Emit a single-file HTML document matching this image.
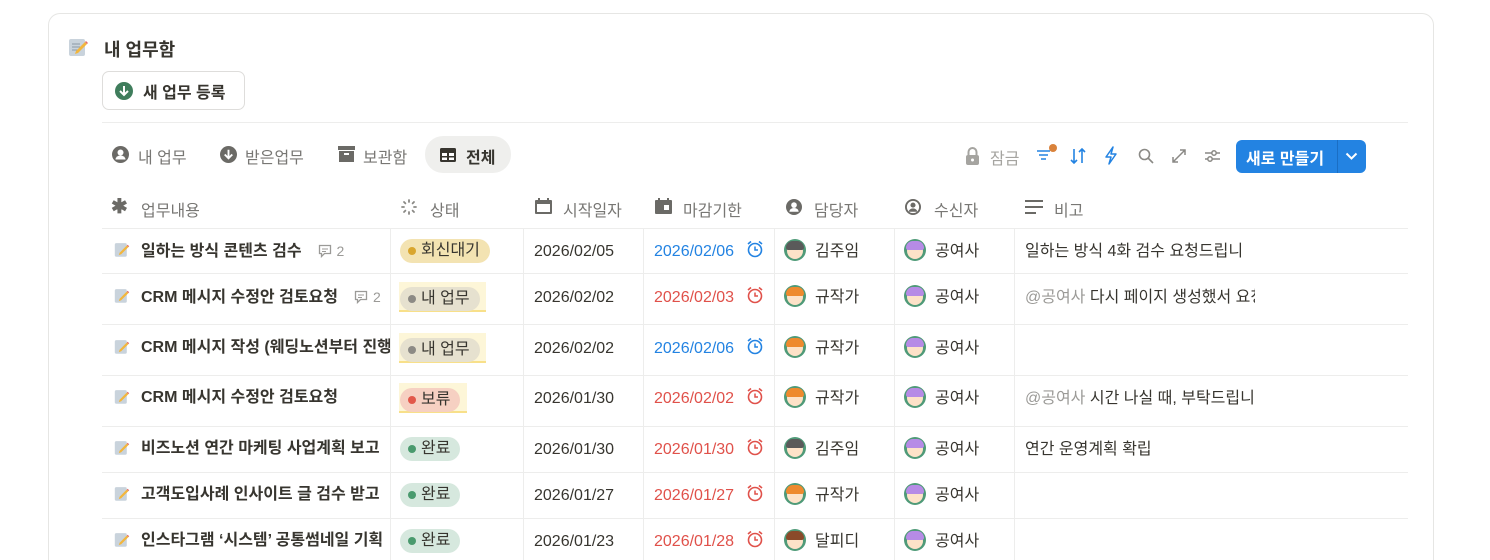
<!DOCTYPE html>
<html><head><meta charset="utf-8"><style>
*{box-sizing:border-box;margin:0;padding:0}
html,body{width:1490px;height:560px;overflow:hidden}
body{background:#fff;font-family:"Liberation Sans","Noto Sans CJK KR",sans-serif;color:#37352f;position:relative;font-size:16px}
.a{position:absolute;white-space:nowrap}
.card{position:absolute;left:48px;top:13px;width:1386px;height:547px;border:1px solid #e6e6e4;border-bottom:none;border-radius:12px 12px 0 0}
.hl{position:absolute;height:1px;background:#ededec;left:102px;width:1306px}
.vl{position:absolute;width:1px;background:#ededec}
.hdr{color:#787774;font-size:16px}
.rt{line-height:20px}
.tag{position:absolute;height:24px;border-radius:12px;padding:0 10px 0 8px;font-size:16px;line-height:24px;display:flex;align-items:center;gap:5px}
.dot{width:8px;height:8px;border-radius:50%}
.av{position:absolute;width:22px;height:22px;border-radius:50%;background:#4f9a78;overflow:hidden}
.av i{position:absolute;left:3px;top:4px;width:16px;height:16px;border-radius:50%;background:#fde2c8}
.av b{position:absolute;left:2px;top:2px;width:18px;height:9px;border-radius:9px 9px 3px 3px}
</style></head><body>
<div class="card"></div>
<svg class="a" style="left:68px;top:37px" width="20" height="20" viewBox="0 0 20 20"><rect x="1" y="2" width="16" height="17" rx="2" fill="#c9d3dc"/><path d="M4 7h8M4 10h8M4 13h6" stroke="#8a98a6" stroke-width="1"/><path d="M8 14l9-9 2 2-9 9-3 1z" fill="#f2b63d"/><path d="M17 5l2 2 1-1-2-2z" fill="#e46a6a"/></svg>
<div class="a" style="left:104px;top:36px;font-size:18px;font-weight:bold;color:#37352f">내 업무함</div>
<div class="a" style="left:102px;top:71px;width:143px;height:39px;border:1px solid #dedddb;border-radius:7px"></div>
<svg class="a" style="left:115px;top:82px" width="18" height="18" viewBox="0 0 18 18"><circle cx="9" cy="9" r="9" fill="#3f7d5c"/><path d="M9 4v9M5 9l4 4 4-4" stroke="#fff" stroke-width="2" fill="none"/></svg>
<div class="a" style="left:143px;top:79px;font-size:16px;font-weight:bold">새 업무 등록</div>
<div class="hl" style="top:122px"></div>
<svg class="a" style="left:112px;top:146px" width="17" height="17" viewBox="0 0 17 17"><circle cx="8.5" cy="8.5" r="8.5" fill="#6b6a66"/><circle cx="8.5" cy="6.5" r="3" fill="#fff"/><path d="M3.5 13.5a5 4 0 0 1 10 0" fill="#fff"/></svg>
<div class="a" style="left:138px;top:144px;color:#787774">내 업무</div>
<svg class="a" style="left:220px;top:146px" width="17" height="17" viewBox="0 0 18 18"><circle cx="9" cy="9" r="9" fill="#6b6a66"/><path d="M9 4v9M5 9l4 4 4-4" stroke="#fff" stroke-width="2" fill="none"/></svg>
<div class="a" style="left:245px;top:144px;color:#787774">받은업무</div>
<svg class="a" style="left:338px;top:146px" width="17" height="16" viewBox="0 0 17 16"><rect x="0" y="0" width="17" height="4" fill="#6b6a66"/><rect x="1" y="5" width="15" height="11" fill="#6b6a66"/><rect x="6" y="7" width="5" height="2" fill="#fff"/></svg>
<div class="a" style="left:363px;top:144px;color:#787774">보관함</div>
<div class="a" style="left:425px;top:136px;width:86px;height:37px;border-radius:18px;background:#efefed"></div>
<svg class="a" style="left:440px;top:148px" width="16" height="14" viewBox="0 0 16 14"><rect width="16" height="14" rx="1.5" fill="#37352f"/><path d="M2 5h5v3H2zM9 5h5v3H9zM2 9.5h5V12H2zM9 9.5h5V12H9z" fill="#fff"/></svg>
<div class="a" style="left:466px;top:144px;font-weight:bold">전체</div>
<svg class="a" style="left:965px;top:147px" width="15" height="18" viewBox="0 0 15 18"><path d="M3.5 8V5a4 4 0 0 1 8 0v3" stroke="#a5a4a0" stroke-width="2" fill="none"/><rect x="1" y="8" width="13" height="10" rx="2" fill="#a5a4a0"/><circle cx="7.5" cy="13" r="1.5" fill="#fff"/></svg>
<div class="a" style="left:990px;top:145px;color:#a5a4a0">잠금</div>
<svg class="a" style="left:1035px;top:143px" width="24" height="20" viewBox="0 0 24 20"><path d="M2 8h13M4 12h9M6 16h5" stroke="#2383e2" stroke-width="1.6"/><circle cx="18" cy="5" r="4" fill="#d9823b"/></svg>
<svg class="a" style="left:1069px;top:147px" width="18" height="18" viewBox="0 0 18 18"><path d="M5 2v14M2 13l3 3 3-3M13 16V2M10 5l3-3 3 3" stroke="#2383e2" stroke-width="1.6" fill="none"/></svg>
<svg class="a" style="left:1104px;top:146px" width="14" height="19" viewBox="0 0 14 19"><path d="M9 1L2 11h5l-2 7 7-10H7z" stroke="#2383e2" stroke-width="1.5" fill="none" stroke-linejoin="round"/></svg>
<svg class="a" style="left:1138px;top:148px" width="16" height="16" viewBox="0 0 16 16"><circle cx="6.5" cy="6.5" r="5" stroke="#8a8985" stroke-width="1.6" fill="none"/><path d="M10 10l5 5" stroke="#8a8985" stroke-width="1.6"/></svg>
<svg class="a" style="left:1171px;top:148px" width="16" height="16" viewBox="0 0 16 16"><path d="M2 14L14 2M9 2h5v5M2 9v5h5" stroke="#8a8985" stroke-width="1.5" fill="none"/></svg>
<svg class="a" style="left:1204px;top:149px" width="17" height="14" viewBox="0 0 17 14"><path d="M1 4h15M1 10h15" stroke="#8a8985" stroke-width="1.5"/><circle cx="10" cy="4" r="2.2" fill="#fff" stroke="#8a8985" stroke-width="1.5"/><circle cx="6" cy="10" r="2.2" fill="#fff" stroke="#8a8985" stroke-width="1.5"/></svg>
<div class="a" style="left:1236px;top:140px;width:130px;height:33px;border-radius:6px;background:#2383e2"></div>
<div class="a" style="left:1337px;top:140px;width:1px;height:33px;background:#1a6ec4"></div>
<div class="a" style="left:1246px;top:145px;color:#fff;font-weight:bold;font-size:16px">새로 만들기</div>
<svg class="a" style="left:1345px;top:152px" width="13" height="9" viewBox="0 0 13 9"><path d="M1.5 1.5l5 5 5-5" stroke="#fff" stroke-width="2" fill="none"/></svg>
<div class="a hdr" style="left:111px;top:197px;font-size:20px;font-weight:bold;color:#6b6a66;line-height:20px">✱</div>
<div class="a hdr" style="left:141px;top:197px">업무내용</div>
<svg class="a" style="left:401px;top:199px" width="16" height="16" viewBox="0 0 16 16"><g stroke="#8a8985" stroke-width="1.8" stroke-linecap="round"><path d="M8 1v2M8 13v2M1 8h2M13 8h2M3 3l1.4 1.4M11.6 11.6L13 13M3 13l1.4-1.4M11.6 4.4L13 3"/></g></svg>
<div class="a hdr" style="left:430px;top:197px">상태</div>
<svg class="a" style="left:535px;top:198px" width="17" height="16" viewBox="0 0 17 16"><rect x="0" y="2" width="17" height="14" rx="1" fill="#6b6a66"/><rect x="2" y="6" width="13" height="8" fill="#fff"/><rect x="3" y="0" width="2" height="3" fill="#6b6a66"/><rect x="12" y="0" width="2" height="3" fill="#6b6a66"/></svg>
<div class="a hdr" style="left:563px;top:197px">시작일자</div>
<svg class="a" style="left:655px;top:198px" width="17" height="16" viewBox="0 0 17 16"><rect x="0" y="2" width="17" height="14" rx="1" fill="#6b6a66"/><rect x="9" y="7" width="5" height="5" fill="#fff"/><rect x="3" y="0" width="2" height="3" fill="#6b6a66"/><rect x="12" y="0" width="2" height="3" fill="#6b6a66"/></svg>
<div class="a hdr" style="left:683px;top:197px">마감기한</div>
<svg class="a" style="left:786px;top:199px" width="16" height="16" viewBox="0 0 17 17"><circle cx="8.5" cy="8.5" r="8.5" fill="#6b6a66"/><circle cx="8.5" cy="6.5" r="3" fill="#fff"/><path d="M3.5 13.5a5 4 0 0 1 10 0" fill="#fff"/></svg>
<div class="a hdr" style="left:814px;top:197px">담당자</div>
<svg class="a" style="left:905px;top:199px" width="16" height="16" viewBox="0 0 17 17"><circle cx="8.5" cy="8.5" r="7.5" fill="none" stroke="#6b6a66" stroke-width="2"/><circle cx="8.5" cy="6.5" r="2.7" fill="#6b6a66"/><path d="M4 13.5a4.5 3.5 0 0 1 9 0" fill="#6b6a66"/></svg>
<div class="a hdr" style="left:934px;top:197px">수신자</div>
<svg class="a" style="left:1025px;top:200px" width="18" height="14" viewBox="0 0 18 14"><path d="M0 1h18M0 7h18M0 13h11" stroke="#6b6a66" stroke-width="2"/></svg>
<div class="a hdr" style="left:1054px;top:197px">비고</div>
<div class="hl" style="top:228px"></div>
<div class="hl" style="top:273px"></div>
<div class="hl" style="top:324px"></div>
<div class="hl" style="top:375px"></div>
<div class="hl" style="top:426px"></div>
<div class="hl" style="top:472px"></div>
<div class="hl" style="top:518px"></div>
<div class="vl" style="left:390px;top:228px;height:332px"></div>
<div class="vl" style="left:523px;top:228px;height:332px"></div>
<div class="vl" style="left:643px;top:228px;height:332px"></div>
<div class="vl" style="left:774px;top:228px;height:332px"></div>
<div class="vl" style="left:894px;top:228px;height:332px"></div>
<div class="vl" style="left:1014px;top:228px;height:332px"></div>

<div id="rows"></div>
<script>
const rows=[
[250,"일하는 방식 콘텐츠 검수",2,["회신대기","#f3e3b2","#d9a62e"],false,"2026/02/05","2026/02/06",1,["김주임","#5a5a5a"],"일하는 방식 4화 검수 요청드립니","",1],
[296,"CRM 메시지 수정안 검토요청",2,["내 업무","#e6e1cf","#8c8a85"],true,"2026/02/02","2026/02/03",0,["규작가","#ee8a2e"],"다시 페이지 생성했서 요청","@공여사 "],
[347,"CRM 메시지 작성 (웨딩노션부터 진행",0,["내 업무","#e6e1cf","#8c8a85"],true,"2026/02/02","2026/02/06",1,["규작가","#ee8a2e"],"",""],
[397,"CRM 메시지 수정안 검토요청",0,["보류","#f6d0c2","#e2584a"],true,"2026/01/30","2026/02/02",0,["규작가","#ee8a2e"],"시간 나실 때, 부탁드립니다","@공여사 "],
[448,"비즈노션 연간 마케팅 사업계획 보고",0,["완료","#d6e8de","#4a9a6e"],false,"2026/01/30","2026/01/30",0,["김주임","#5a5a5a"],"연간 운영계획 확립",""],
[494,"고객도입사례 인사이트 글 검수 받고",0,["완료","#d6e8de","#4a9a6e"],false,"2026/01/27","2026/01/27",0,["규작가","#ee8a2e"],"",""],
[540,"인스타그램 ‘시스템’ 공통썸네일 기획",0,["완료","#d6e8de","#4a9a6e"],false,"2026/01/23","2026/01/28",0,["달피디","#8a4a2a"],"",""]];
let h="";
for(const r of rows){const y=r[0];const t=y-8;
h+=`<svg class="a" style="left:114px;top:${y-9}px" width="16" height="17" viewBox="0 0 20 20"><rect x="1" y="2" width="15" height="17" rx="2" fill="#c9d3dc"/><path d="M7 14l9-9 2 2-9 9-3 1z" fill="#f2b63d"/><path d="M16 5l2 2 1-1-2-2z" fill="#e46a6a"/></svg>`;
h+=`<div class="a rt" style="left:141px;top:${t-1}px;width:249px;overflow:hidden;font-weight:bold">${r[1]}`+(r[2]?`<span style="font-weight:normal;color:#9b9a97;font-size:14px;margin-left:16px"><svg width="14" height="14" viewBox="0 0 14 14" style="vertical-align:-2px;margin-right:5px"><path d="M1.5 1.5h11v8h-6l-3 3v-3h-2z" fill="none" stroke="#9b9a97" stroke-width="1.3"/><path d="M4 5h6M4 7.5h4" stroke="#9b9a97" stroke-width="1.1"/></svg>2</span>`:"")+`</div>`;
const tg=r[3];
if(r[4]) h+=`<div class="a" style="left:399px;top:${y-14}px;width:${tg[0].length>2?87:68}px;height:30px;background:#fdf6d8;border-bottom:2px solid #f8e08a"></div>`;
h+=`<div class="tag" style="left:400px;top:${y-11+(r[4]?2:0)}px;background:${tg[1]}"><span class="dot" style="background:${tg[2]}"></span>${tg[0]}</div>`;
h+=`<div class="a rt" style="left:534px;top:${t}px">${r[5]}</div>`;
const c=r[7]?"#2383e2":"#e0514a";
h+=`<div class="a rt" style="left:654px;top:${t}px;color:${c}">${r[6]}</div>`;
h+=`<svg class="a" style="left:746px;top:${y-10}px" width="18" height="18" viewBox="0 0 18 18"><circle cx="9" cy="10" r="6.5" fill="none" stroke="${c}" stroke-width="1.6"/><path d="M9 6.5V10h3" stroke="${c}" stroke-width="1.5" fill="none"/><path d="M2 4l3-2.5M16 4l-3-2.5" stroke="${c}" stroke-width="1.6"/></svg>`;
const av=(x,col)=>`<div class="av" style="left:${x}px;top:${y-11}px"><i></i><b style="background:${col}"></b></div>`;
h+=av(784,r[8][1])+`<div class="a rt" style="left:815px;top:${t}px">${r[8][0]}</div>`;
h+=av(904,"#b68be6")+`<div class="a rt" style="left:935px;top:${t}px">공여사</div>`;
if(r[9]) h+=`<div class="a rt" style="left:1025px;top:${t}px;width:230px;overflow:hidden"><span style="color:#9b9a97">${r[10]}</span>${r[9]}</div>`;
}
document.getElementById("rows").innerHTML=h;
</script>
</body></html>
